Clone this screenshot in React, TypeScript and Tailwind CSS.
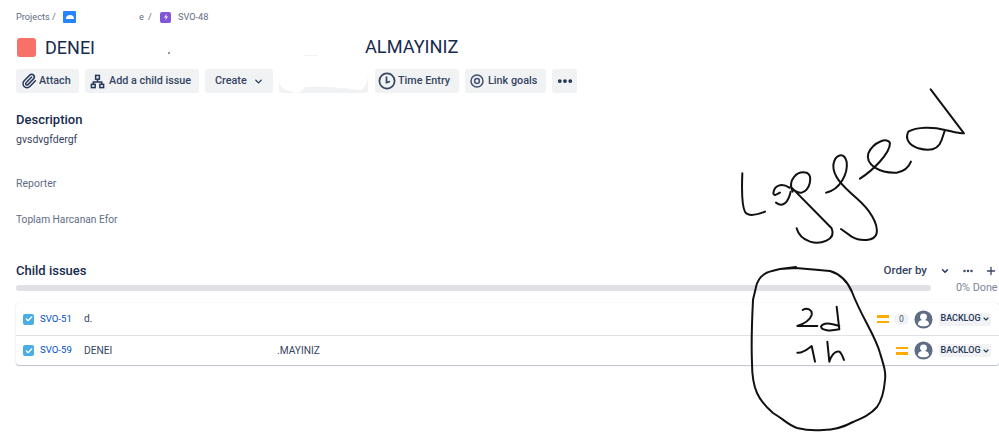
import { Check, ChevronDown, Ellipsis, Paperclip, Plus } from "lucide-react";
import type { ReactNode } from "react";

function ActionButton({ className = "", children }: { className?: string; children: ReactNode }) {
  return (
    <div className={`flex h-6 items-center rounded-[3px] bg-[#f1f2f4] text-[10.8px] font-medium text-[#344563] ${className}`}>
      {children}
    </div>
  );
}

function Priority() {
  return (
    <div className="flex h-[8px] w-[12px] flex-col justify-between">
      <div className="h-[2.5px] bg-[#ffab00]" />
      <div className="h-[2.5px] bg-[#ffab00]" />
    </div>
  );
}

function Avatar() {
  return (
    <svg viewBox="0 0 20 20" className="h-[19px] w-[19px] shrink-0">
      <circle cx="10" cy="10" r="9.5" fill="#5e6c84" />
      <circle cx="10" cy="7.2" r="3.6" fill="#fff" />
      <path d="M4.2 15.2c0-3.4 2.4-4.6 5.8-4.6s5.8 1.2 5.8 4.6c-1.4 1.4-3.6 1.9-5.8 1.9s-4.4-.5-5.8-1.9z" fill="#fff" />
    </svg>
  );
}

function StatusTag() {
  return (
    <div className="flex h-[13px] w-[52px] items-center justify-center gap-[1px] rounded-[2px] bg-[#f1f2f4] text-[9px] font-medium text-[#253858]">
      BACKLOG
      <ChevronDown size={8} strokeWidth={3.5} />
    </div>
  );
}

function RowCheck() {
  return (
    <div className="flex h-[11px] w-[11px] items-center justify-center rounded-[2px] bg-[#4bade8]">
      <Check size={8} strokeWidth={4} className="text-white" />
    </div>
  );
}

function Scribbles() {
  return (
    <svg
      viewBox="0 0 999 432"
      className="pointer-events-none absolute left-0 top-0 h-[432px] w-[999px]"
      fill="none"
      stroke="#111"
      strokeWidth="2"
      strokeLinecap="round"
      strokeLinejoin="round"
    >
      {/* "Logged" */}
      <g transform="translate(700 80) scale(0.3333)" strokeWidth="6">
        <path d="M127 280C125 330 124 375 135 395C145 412 170 405 195 395" />
        <path d="M268 323C245 308 222 316 220 340C222 350 232 342 240 338M228 368C250 385 265 365 272 335" />
        <path d="M278 335C262 300 290 272 320 278C340 288 330 330 305 338C292 340 282 332 272 320L395 445C410 480 360 495 330 485C310 478 295 465 290 445" />
        <path d="M378 338C420 330 445 280 440 245C432 215 405 222 400 255C398 290 430 320 470 355C510 390 535 430 530 460C525 485 480 485 455 470L423 447" />
        <path d="M480 296C520 270 570 220 570 190C565 170 520 185 505 220C495 255 540 280 590 278C610 275 625 265 633 245" />
        <path d="M692 28L792 160C770 160 750 152 735 150C700 140 650 140 625 155C615 175 625 195 655 205C690 215 715 210 725 180L735 150" />
      </g>
      {/* circled time */}
      <path d="M796 267L780 269L796 268C808 269 820 270 830 271C840 274 847 280 852 292C862 318 875 335 880 353C884 366 886 372 885 380C884 392 882 400 877 407C870 415 862 418 853 422C842 428 832 430 823 430C812 431 805 430 797 428C788 425 782 418 773 413C765 406 760 400 757 393C753 384 752 375 752 363C751 340 752 320 753 300C754 295 755 292 756 287C758 278 763 273 772 271L780 269" />
      <g transform="translate(740 300) scale(0.3333)" strokeWidth="6">
        <path d="M188 30C200 22 218 28 215 45C210 60 190 72 172 78L232 78" />
        <path d="M290 20L298 88C270 94 245 92 243 80C250 65 275 70 298 78" />
        <path d="M172 158C190 160 205 145 215 138L225 185" />
        <path d="M262 125L268 185C272 170 285 150 298 155C305 160 308 170 312 180" />
      </g>
    </svg>
  );
}

export default function App() {
  return (
    <div className="relative h-[432px] w-[999px] overflow-hidden bg-white font-['Roboto',sans-serif]">
      <div className="pl-4">
        {/* breadcrumbs */}
        <div className="flex h-[17px] items-center pt-[17px] text-[9.2px] text-[#5e6c84]">
          <span className="w-[33px]">Projects</span>
          <span className="ml-[3px] w-[3px]">/</span>
          <div className="ml-[8px] flex h-[12px] w-[13px] items-center justify-center rounded-[1px] bg-[#2684ff]">
            <div className="h-[4px] w-[8px] rounded-t-full bg-white" />
          </div>
          <span className="ml-[63px] w-[5px]">e</span>
          <span className="ml-[4px] w-[3px]">/</span>
          <div className="ml-[9px] flex h-[11px] w-[11px] items-center justify-center rounded-[2px] bg-[#7f56d9]">
            <svg viewBox="0 0 10 10" className="h-[8px] w-[8px]">
              <path d="M6 1L2.5 5.5H5L4 9L7.5 4.5H5z" fill="#fff" />
            </svg>
          </div>
          <span className="ml-[7px]">SVO-48</span>
        </div>

        {/* title */}
        <div className="mt-[16px] flex h-7 items-center text-[#172b4d]">
          <div className="ml-[1px] h-[19px] w-[19px] rounded-[3px] bg-[#f87168]" />
          <span className="ml-[9px] w-[50px] whitespace-nowrap text-[18px]">DENEI</span>
          <span className="ml-[73px] mt-2 text-[8px] font-bold">,</span>
          <span className="ml-[135px] mt-3 w-[30px] text-[6px] tracking-[1px] text-[#8993a4]">.....</span>
          <span className="ml-[30px] text-[18.2px]">ALMAYINIZ</span>
        </div>

        {/* actions */}
        <div className="mt-[8px] flex gap-[6px]">
          <ActionButton className="w-[63px] gap-[2px] pl-[5px]">
            <Paperclip size={16} strokeWidth={2.2} className="text-[#253858]" />
            Attach
          </ActionButton>
          <ActionButton className="w-[114px] gap-[4px] pl-[5px]">
            <svg viewBox="0 0 16 16" className="h-[15px] w-[15px]" fill="none" stroke="#253858" strokeWidth="1.6">
              <rect x="6" y="1.5" width="4" height="4" />
              <rect x="1.5" y="11" width="4" height="3.5" />
              <rect x="10.5" y="11" width="4" height="3.5" />
              <path d="M8 5.5V8.5M3.5 11V8.5H12.5V11" />
            </svg>
            Add a child issue
          </ActionButton>
          <ActionButton className="w-[68px] pl-[10px]">
            Create
            <ChevronDown size={11} strokeWidth={3} className="ml-[6px] text-[#253858]" />
          </ActionButton>
          <ActionButton className="w-[89px] overflow-hidden">
            <svg viewBox="0 0 89 24" className="h-6 w-[89px]">
              <path d="M0 0H89V3C89 14 86 20 80 21C66 19 44 17 26 18C22 24 16 25 11 22C3 21 0 16 0 10z" fill="#fff" />
            </svg>
          </ActionButton>
          <ActionButton className="ml-[1px] w-[84px] gap-[2px] pl-[3px]">
            <svg viewBox="0 0 18 18" className="h-[18px] w-[18px]" fill="none" stroke="#344563" strokeWidth="1.7">
              <circle cx="9" cy="9" r="7.6" />
              <path d="M8.5 4.5V10.5L12 9.5" />
            </svg>
            Time Entry
          </ActionButton>
          <ActionButton className="w-[81px] gap-[4px] pl-[5px]">
            <svg viewBox="0 0 14 14" className="h-[14px] w-[14px]" fill="none" stroke="#42526e" strokeWidth="1.5">
              <circle cx="7" cy="7" r="6" />
              <circle cx="7" cy="7" r="2.4" />
            </svg>
            Link goals
          </ActionButton>
          <ActionButton className="w-[25px] justify-center">
            <Ellipsis size={18} strokeWidth={3} className="text-[#172b4d]" />
          </ActionButton>
        </div>

        {/* fields */}
        <div className="mt-[19px] text-[13px] font-medium leading-4 text-[#172b4d]">Description</div>
        <div className="mt-[4px] text-[10.5px] leading-4 text-[#344563]">gvsdvgfdergf</div>
        <div className="mt-[28px] text-[10.5px] leading-4 text-[#5e6c84]">Reporter</div>
        <div className="mt-[20px] text-[10.2px] leading-4 text-[#5e6c84]">Toplam Harcanan Efor</div>

        {/* child issues */}
        <div className="mt-[35px] flex h-4 items-center">
          <span className="text-[13px] font-medium text-[#172b4d]">Child issues</span>
          <span className="ml-auto text-[11.5px] font-medium text-[#344563]">Order by</span>
          <ChevronDown size={10} strokeWidth={3.5} className="ml-[13px] text-[#253858]" />
          <Ellipsis size={12} strokeWidth={3} className="ml-[12px] text-[#344563]" />
          <Plus size={12} strokeWidth={2.6} className="ml-[11px] mr-[2px] text-[#344563]" />
        </div>
        <div className="mt-[3px] flex h-[12px] items-center">
          <div className="h-[6px] w-[915px] rounded-full bg-[#dfe1e6]" />
          <span className="ml-[25px] whitespace-nowrap text-[10.8px] text-[#7a869a]">0% Done</span>
        </div>

        <div className="mt-[9px] rounded-[3px] shadow-[0_1px_1px_rgba(9,30,66,0.25),0_0_1px_rgba(9,30,66,0.2)]">
          <div className="flex h-[33px] items-center border-b border-[#dfe1e6] pl-[7px] text-[10.2px]">
            <RowCheck />
            <span className="ml-[6px] w-[31px] whitespace-nowrap text-[9.6px] text-[#0052cc]">SVO-51</span>
            <span className="ml-[13px] text-[#344563]">d.</span>
            <div className="ml-auto mr-[8px] flex items-center">
              <Priority />
              <div className="ml-[5px] flex h-[12px] w-[15px] items-center justify-center rounded-full bg-[#f1f2f4] text-[8.5px] text-[#42526e]">0</div>
              <div className="ml-[5px]"><Avatar /></div>
              <div className="ml-[6px]"><StatusTag /></div>
            </div>
          </div>
          <div className="flex h-[29px] items-center pl-[7px] text-[10.2px]">
            <RowCheck />
            <span className="ml-[6px] w-[31px] whitespace-nowrap text-[9.6px] text-[#0052cc]">SVO-59</span>
            <span className="ml-[13px] w-[32px] whitespace-nowrap text-[#344563]">DENEI</span>
            <span className="ml-[161px] text-[#344563]">.MAYINIZ</span>
            <div className="ml-auto mr-[8px] flex items-center">
              <Priority />
              <div className="ml-[6px]"><Avatar /></div>
              <div className="ml-[6px]"><StatusTag /></div>
            </div>
          </div>
        </div>
      </div>
      <Scribbles />
    </div>
  );
}
